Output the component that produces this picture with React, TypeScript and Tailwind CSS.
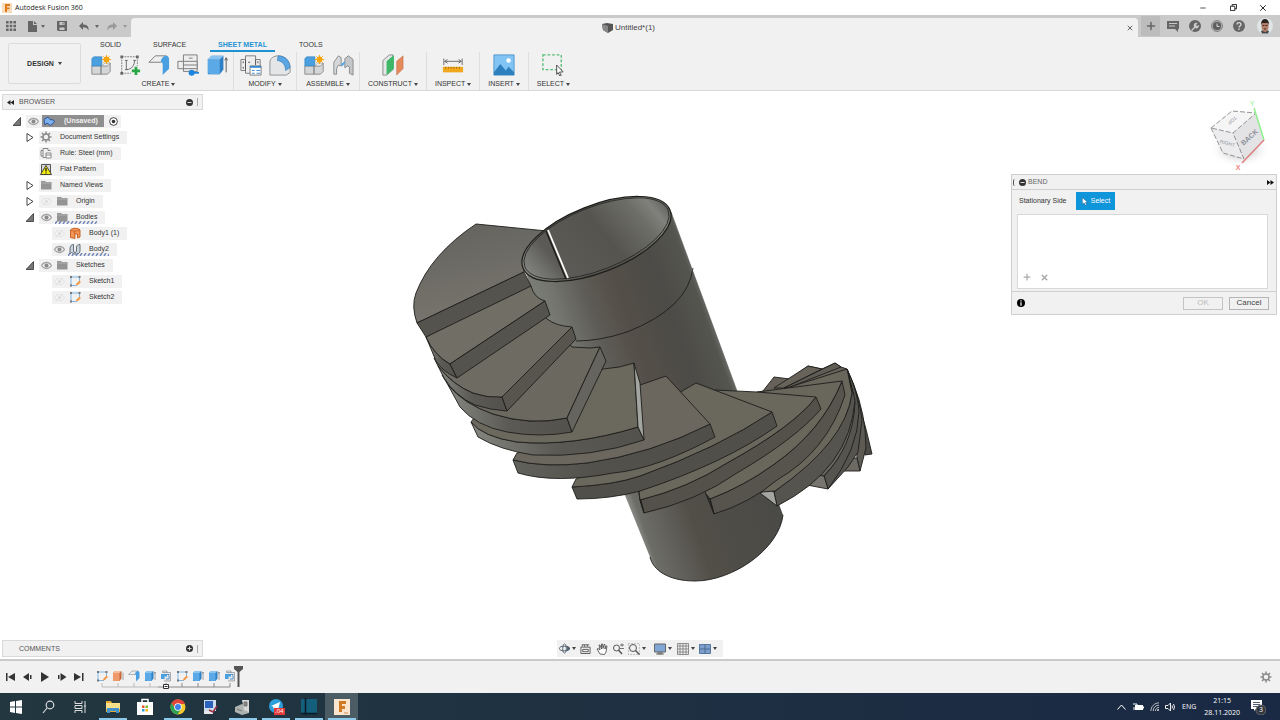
import type { ReactNode } from "react";
import { Search, Minus, X, Plus } from "lucide-react";

type IconName =
  | "box" | "boxStar" | "sketch" | "sketchPlus" | "flange" | "bend" | "unfold" | "rules" | "corner"
  | "joint" | "planes" | "ruler" | "image" | "select" | "gear" | "folder" | "eye" | "eyeOff" | "rule"
  | "flat" | "sheet" | "body" | "root" | "orangeBox";

// every glyph is drawn on a 24 unit grid
const glyphs: Record<IconName, ReactNode> = {
  box: (
    <>
      <path d="M2 6 6 2h13v15l-4 5H2z" fill="#2f7fc4" />
      <path d="M2 6h13v16H4l-2-2z" fill="#5ba9e6" />
      <path d="m2 6 4-4h13l-4 4z" fill="#8cc4f0" />
      <path d="M22 5v15M20.500 7 22 4l1.500 3" stroke="#555" fill="none" />
    </>
  ),
  orangeBox: (
    <>
      <path d="M2 6 6 2h13v15l-4 5H2z" fill="#c4683a" />
      <path d="M2 6h13v16H2z" fill="#f09a6c" />
      <path d="m2 6 4-4h13l-4 4z" fill="#f7bd9c" />
      <path d="M22 5v15" stroke="#555" />
    </>
  ),
  boxStar: (
    <>
      <path d="M2 13h10v9H2zM12 13h7l3-3v9l-3 3h-7z" fill="#d4d6d8" stroke="#888" />
      <path d="M2 5 4 3h9v9l-1 1H2z" fill="#4a9fe0" stroke="#2d7dbb" strokeWidth=".6" />
      <path d="m13 13 3-3h6l-3 3z" fill="#eee" stroke="#888" strokeWidth=".6" />
      <circle cx="18" cy="6" r="3.200" fill="#f5a50b" />
      <path d="M18 1v10M13 6h10M14.500 2.500l7 7M21.500 2.500l-7 7" stroke="#f5a50b" />
    </>
  ),
  sketch: (
    <>
      <path d="M4 4h17M4 4v17h12M21 4v9" stroke="#4f9bdc" fill="none" strokeWidth="1.400" />
      <path d="M2 2h4v4H2zM19 2h4v4h-4zM2 19h4v4H2z" fill="#777" />
      <path d="m14 21 1-4 6-6 3 3-6 6z" fill="#f29a4a" />
    </>
  ),
  sketchPlus: (
    <>
      <path d="M3 3h17M3 3v18h10M20 3v10" stroke="#777" fill="none" strokeDasharray="2 1" />
      <path d="M1.500 1.500h3v3h-3zM18.500 1.500h3v3h-3zM1.500 19.500h3v3h-3z" fill="#666" />
      <path d="M8 7v10c6 0 9-5 9-10M6.500 7h3M6.500 17h3M15.500 7h3" stroke="#666" fill="none" />
      <path d="M18.500 14v9M14 18.500h9" stroke="#2aa745" strokeWidth="3" />
    </>
  ),
  flange: (
    <>
      <path d="M1 9 8 2h12l-6 7z" fill="#eee" stroke="#777" />
      <path d="M14 9c0-4 3-7 6-7 2 0 3 2 3 4v10l-7 7V11c0-1-1-2-2-2z" fill="#4a9fe0" />
    </>
  ),
  bend: (
    <>
      <path d="M7 1h15v18H7z" fill="#eee" stroke="#777" />
      <path d="M1 8h21v8H1z" fill="#eee" stroke="#777" />
      <path d="M13 4.500h4M7 8v8M7 12h15" stroke="#777" fill="none" />
      <path d="M16 20.500h8" stroke="#1f86e0" strokeWidth="2" />
      <circle cx="16" cy="20.500" r="3.300" fill="#1f86e0" />
    </>
  ),
  unfold: (
    <>
      <path d="M5 5h16v17H8M5 5V2h9v3" fill="#e2e6ea" stroke="#666" />
      <path d="M2 8h12v5H9v5H2z" fill="#4a9fe0" />
      <path d="M14 9h4v9h-6" fill="none" stroke="#2f7fc4" strokeWidth="1.500" />
    </>
  ),
  rules: (
    <>
      <path d="M6 2h11v4h5v12h-5v3H6v-3H1V6h5z" fill="#eee" stroke="#777" />
      <path d="M6 6v12M17 6v6M3.500 8v2M3.500 14v2M19.500 8v2M9 9h2" stroke="#444" />
      <path d="M11 13h12v10H11z" fill="#fff" stroke="#777" />
      <path d="M11 13h12v2H11z" fill="#2f86d0" />
      <path d="M13 18h3M18 18h4M13 21h3M18 21h4" stroke="#2f86d0" />
    </>
  ),
  corner: (
    <>
      <path d="M1 23V9c0-4 4-7 9-7 8 0 13 6 13 13v5l-4 3z" fill="#e3e5e6" stroke="#8a8d90" />
      <path d="M10 2c8 0 13 6 13 13l-5 3c0-6-3-10-9-11z" fill="#5aa6e3" stroke="#3079b6" strokeWidth=".6" />
    </>
  ),
  joint: (
    <>
      <path d="M2 9 7 2l3 2v9l-3-1-2 4v6H2z" fill="#d5d8da" stroke="#888" />
      <path d="m14 5 4-3 5 4v17l-4-2v-7l-2-1-3 2z" fill="#c3c7ca" stroke="#888" />
      <path d="m10 11 4-3v3l-4 3z" fill="#5aa6e3" />
    </>
  ),
  planes: (
    <>
      <path d="M1 7 8 1h4v16l-7 6H1z" fill="#e4e6e7" stroke="#888" />
      <path d="m5 8 8-7v15l-8 7z" fill="#3fb768" />
      <path d="m16 8 7-6v14l-7 7z" fill="#e58a5c" stroke="#b86238" strokeWidth=".5" />
    </>
  ),
  ruler: (
    <>
      <path d="M2 5v7M22 5v7M3 8h18M6 6 3 8l3 2M18 6l3 2-3 2" stroke="#666" fill="none" />
      <path d="M1 14h22v6H1z" fill="#f2a81d" />
      <path d="M4 14v2M7 14v2M10 14v2M13 14v2M16 14v2M19 14v2" stroke="#8a5c00" strokeWidth=".8" />
    </>
  ),
  image: (
    <>
      <path d="M1 1h22v22H1z" fill="#82c4f3" stroke="#4b94cb" />
      <path d="M1 20 8 11l6 7 3-4 6 6v3H1z" fill="#2d80bd" />
      <circle cx="17" cy="7" r="2.500" fill="#fff" />
    </>
  ),
  select: (
    <>
      <path d="M1 1h20v16H1z" fill="none" stroke="#57bd76" strokeWidth="1.500" strokeDasharray="3 2" />
      <path d="m16 12 7 7.500-4 .3 2 3.500-1.500.7-2-3.700-1.500 2z" fill="#fff" stroke="#444" />
    </>
  ),
  gear: (
    <>
      <circle cx="12" cy="12" r="6" fill="none" stroke="#8a8a8a" strokeWidth="3" />
      <path d="M12 1v5M12 18v5M1 12h5M18 12h5M4 4l4 4M16 16l4 4M20 4l-4 4M8 16l-4 4" stroke="#8a8a8a" strokeWidth="3" />
    </>
  ),
  folder: (
    <>
      <path d="M2 4h8l2 2h11v15H2z" fill="#949494" />
      <path d="M2 8h21" stroke="#b9b9b9" strokeWidth="1.500" />
    </>
  ),
  eye: (
    <>
      <path d="M1 12c6-9 16-9 22 0-6 9-16 9-22 0z" fill="none" stroke="#a0a0a0" strokeWidth="2.500" />
      <circle cx="12" cy="12" r="4.500" fill="#8a8a8a" />
    </>
  ),
  eyeOff: (
    <>
      <path d="M1 12c6-9 16-9 22 0-6 9-16 9-22 0zM4 20 20 5" fill="none" stroke="#dfdfdf" strokeWidth="2" />
      <circle cx="12" cy="12" r="3" fill="#dadada" />
    </>
  ),
  rule: (
    <>
      <path d="M6 3h10v4h5M6 3v4H2v11h4v3h6M6 7v11" fill="none" stroke="#888" strokeWidth="2" />
      <path d="M12 12h10v10H12zM12 16h10" fill="#fff" stroke="#888" strokeWidth="2" />
    </>
  ),
  flat: (
    <>
      <path d="M3 3h18v18H3z" fill="#d5d8da" stroke="#555" strokeWidth="2" />
      <path d="m12 5 11 18H1z" fill="#f4ee12" stroke="#333" strokeWidth="1.800" />
      <path d="M12 10v7M12 19v2" stroke="#111" strokeWidth="2.500" />
    </>
  ),
  sheet: (
    <path d="M2 22V12c0-6 3-9 7-9v13c0 4 6 4 6 0V8c0-3 3-5 7-5v12c0 5-3 7-7 7h-4c-3 0-4-3-6-3z" fill="#cdd6df" stroke="#59636d" strokeWidth="1.800" />
  ),
  body: (
    <>
      <path d="M3 6c4-5 16-4 19 0v14l-5 2v-8h-5v9l-9-2z" fill="#f3955a" stroke="#c45a18" strokeWidth="1.800" />
      <path d="M3 6c5 3 13 3 19 0M11 8v6" fill="none" stroke="#c45a18" strokeWidth="1.500" />
    </>
  ),
  root: (
    <path d="M2 9 10 4l4 5 7 1 2 4-8 7-7-5-4 4z" fill="#7fb0ee" stroke="#234f96" strokeWidth="1.800" />
  ),
};

function Icon({ name, className }: { name: IconName; className: string }) {
  return (
    <svg viewBox="0 0 24 24" className={`shrink-0 ${className}`} aria-hidden="true">
      {glyphs[name]}
    </svg>
  );
}

function Caret({ className = "text-[#444]" }: { className?: string }) {
  return (
    <svg viewBox="0 0 4 3" className={`h-[3px] w-1 shrink-0 ${className}`} aria-hidden="true">
      <path d="M0 0h4L2 3z" fill="currentColor" />
    </svg>
  );
}

function TitleBar() {
  return (
    <header className="flex h-[15px] shrink-0 items-center justify-between bg-white pl-0.5 font-['Open_Sans',sans-serif] text-[7px] text-black">
      <div className="flex items-center gap-[3px]">
        <svg viewBox="0 0 10 10" className="size-[10px]" aria-hidden="true">
          <path d="M0 0h10v10H0z" fill="#f9dcbc" />
          <path d="M3 9V1h5v2H5v1.500h2.500v1.700H5V9z" fill="#e07b1c" />
        </svg>
        <span className="text-[#222]">Autodesk Fusion 360</span>
      </div>
      <div className="flex items-center pr-0.5">
        <button aria-label="Minimize" className="grid w-[30px] place-items-center"><Minus size={8} /></button>
        <button aria-label="Restore" className="grid w-[30px] place-items-center">
          <svg viewBox="0 0 8 8" className="size-[7px]" fill="none" stroke="#111" aria-hidden="true">
            <path d="M.5 2.500h5v5h-5zM2.500 2.500v-2h5v5h-2" />
          </svg>
        </button>
        <button aria-label="Close" className="grid w-[30px] place-items-center"><X size={10} /></button>
      </div>
    </header>
  );
}

function TabBar() {
  return (
    <div className="flex h-[22px] shrink-0 bg-[#cacaca] text-[#666]">
      <div className="flex w-[131px] shrink-0 items-center pl-1.5">
        <button aria-label="Data panel">
          <svg viewBox="0 0 10 10" className="size-[10px]" fill="#666" aria-hidden="true">
            <path d="M0 0h2.600v2.600H0zM3.700 0h2.600v2.600H3.700zM7.400 0H10v2.600H7.400zM0 3.700h2.600v2.600H0zM3.700 3.700h2.600v2.600H3.700zM7.400 3.700H10v2.600H7.400zM0 7.400h2.600V10H0zM3.700 7.400h2.600V10H3.700zM7.400 7.400H10V10H7.400z" />
          </svg>
        </button>
        <button aria-label="File" className="ml-3 flex items-center gap-1">
          <svg viewBox="0 0 9 11" className="h-[11px] w-[9px]" fill="#666" aria-hidden="true"><path d="M0 0h5v4h4v7H0zM6 0l3 3H6z" /></svg>
          <Caret className="text-[#666]" />
        </button>
        <button aria-label="Save" className="ml-3">
          <svg viewBox="0 0 10 10" className="size-[10px]" aria-hidden="true">
            <path d="M0 0h10v10H1L0 9z" fill="#666" />
            <path d="M2.500 1h5v3h-5zM2.500 6.500h5V9h-5z" fill="#cacaca" />
            <path d="M5.500 1.500h1v2h-1z" fill="#666" />
          </svg>
        </button>
        <button aria-label="Undo" className="ml-3 flex items-center gap-1.5">
          <svg viewBox="0 0 10 9" className="h-[9px] w-[10px]" aria-hidden="true"><path d="M4 0v2.500c4 0 6 2 5.500 6C8.500 6 7 5.200 4 5.200V8L0 4z" fill="#666" /></svg>
          <Caret className="text-[#666]" />
        </button>
        <button aria-label="Redo" className="ml-2 flex items-center gap-1.5">
          <svg viewBox="0 0 10 9" className="h-[9px] w-[10px]" aria-hidden="true"><path d="M6 0v2.500c-4 0-6 2-5.500 6C1.500 6 3 5.200 6 5.200V8l4-4z" fill="#999" /></svg>
          <Caret className="text-[#999]" />
        </button>
      </div>
      <div className="mt-[3px] flex flex-1 items-center rounded-t-sm bg-[#f1f1f1] pr-1">
        <div className="flex flex-1 items-center justify-center gap-0.5 text-[8px] text-[#444]">
          <svg viewBox="0 0 11 10" className="h-[10px] w-[11px]" aria-hidden="true">
            <path d="M0 1 5 0l6 1v6L6 10 1 7z" fill="#555" />
            <path d="m0 1 6 2v7L1 7z" fill="#888" />
          </svg>
          Untitled*(1)
        </div>
        <button aria-label="Close document"><X size={8} strokeWidth={3} /></button>
      </div>
      <div className="flex w-[142px] shrink-0 items-center gap-2.5 pl-[3px]">
        <button aria-label="New tab" className="grid h-5 w-[19px] place-items-center bg-[#bcbcbc]"><Plus size={12} strokeWidth={3} /></button>
        <button aria-label="Comments" className="-ml-[3px]">
          <svg viewBox="0 0 12 12" className="size-3" aria-hidden="true">
            <path d="M0 1h12v8h-1v3L8 9H0z" fill="#666" />
            <path d="M2 3.500h8M2 6h6" stroke="#cacaca" />
          </svg>
        </button>
        <button aria-label="Extensions">
          <svg viewBox="0 0 12 12" className="size-3" aria-hidden="true">
            <circle cx="6" cy="6" r="6" fill="#666" />
            <path d="m2 10 3-3C4 4 6 2 8.500 3L7 5l1 1 2-1c0 3-2 4-4 3l-3 3" fill="#cacaca" />
          </svg>
        </button>
        <button aria-label="Job status">
          <svg viewBox="0 0 12 12" className="size-3" aria-hidden="true">
            <circle cx="6" cy="6" r="5.500" fill="#aaa" stroke="#888" />
            <circle cx="6" cy="6" r="4" fill="#5d5d5d" />
            <path d="M6 3.500V6.500h2.500" stroke="#ddd" fill="none" />
          </svg>
        </button>
        <button aria-label="Help">
          <svg viewBox="0 0 12 12" className="size-3" aria-hidden="true">
            <circle cx="6" cy="6" r="6" fill="#666" />
            <path d="M4 4.500C4 2 8 2 8 4.500 8 6 6 6 6 7.500M6 8.500V10" stroke="#ddd" strokeWidth="1.300" fill="none" />
          </svg>
        </button>
        <button aria-label="Account" className="ml-0.5">
          <svg viewBox="0 0 16 16" className="size-4" aria-hidden="true">
            <circle cx="8" cy="8" r="8" fill="#dfe5e6" />
            <path d="M4 13c1-1 7-1 8 0l-1 2.500H5z" fill="#41474c" />
            <path d="M4.500 6c0-5 7-5 7 0v3c0 3-2 5-3.500 5S4.500 12 4.500 9z" fill="#b07d68" />
            <path d="M4 7c-.5-8 8.500-8 8 0l-1-2H5z" fill="#2d2321" />
            <path d="M5.500 7.500h2M8.500 7.500h2M7 11h2" stroke="#4a2f28" />
          </svg>
        </button>
      </div>
    </div>
  );
}

const groups: { label: string; icons: IconName[] }[] = [
  { label: "CREATE", icons: ["boxStar", "sketchPlus", "flange", "bend", "box"] },
  { label: "MODIFY", icons: ["rules", "corner"] },
  { label: "ASSEMBLE", icons: ["boxStar", "joint"] },
  { label: "CONSTRUCT", icons: ["planes"] },
  { label: "INSPECT", icons: ["ruler"] },
  { label: "INSERT", icons: ["image"] },
  { label: "SELECT", icons: ["select"] },
];

const tabs = ["SOLID", "SURFACE", "SHEET METAL", "TOOLS"];

function Ribbon() {
  return (
    <div className="flex h-[54px] shrink-0 border-b border-[#d8d8d8] bg-[#f1f1f1] text-[7px] text-[#333]">
      <button className="mt-1.5 ml-2 flex h-[41px] w-[73px] shrink-0 items-center justify-center gap-1 rounded-xs border border-[#dcdcdc] font-bold">
        DESIGN <Caret />
      </button>
      <div className="ml-[3px] flex flex-col">
        <nav className="flex h-4 gap-4 pl-2">
          {tabs.map((tab) => (
            <a
              key={tab}
              href="#ribbon"
              className={
                tab === "SHEET METAL"
                  ? "border-b-2 border-[#1f93d1] px-2 pt-[3px] leading-[10px] font-bold text-[#1f93d1]"
                  : "px-2 pt-[3px] leading-[10px]"
              }
            >
              {tab}
            </a>
          ))}
        </nav>
        <div className="flex">
          {groups.map((group) => (
            <div
              key={group.label}
              className={
                group.icons.length > 1
                  ? "flex flex-col items-center border-r border-[#dedede] px-1"
                  : "flex flex-col items-center border-r border-[#dedede] px-2 last:border-0"
              }
            >
              <div className="flex h-[25px] items-center gap-1">
                {group.icons.map((icon, i) => (
                  <button key={i} aria-label={`${group.label} ${i + 1}`} className="grid w-[25px] place-items-center">
                    <Icon name={icon} className="size-[22px]" />
                  </button>
                ))}
              </div>
              <button className="flex items-center gap-0.5 pt-px leading-3">
                {group.label} <Caret />
              </button>
            </div>
          ))}
        </div>
      </div>
    </div>
  );
}

type Row = {
  label: string;
  level: 0 | 1 | 2;
  icon: IconName;
  eye?: "eye" | "eyeOff";
  open?: boolean;
  wavy?: boolean;
};

const rows: Row[] = [
  { label: "(Unsaved)", level: 0, icon: "root", eye: "eye", open: true },
  { label: "Document Settings", level: 1, icon: "gear", open: false },
  { label: "Rule: Steel (mm)", level: 1, icon: "rule" },
  { label: "Flat Pattern", level: 1, icon: "flat" },
  { label: "Named Views", level: 1, icon: "folder", open: false },
  { label: "Origin", level: 1, icon: "folder", eye: "eyeOff", open: false },
  { label: "Bodies", level: 1, icon: "folder", eye: "eye", open: true, wavy: true },
  { label: "Body1 (1)", level: 2, icon: "body", eye: "eyeOff" },
  { label: "Body2", level: 2, icon: "sheet", eye: "eye", wavy: true },
  { label: "Sketches", level: 1, icon: "folder", eye: "eye", open: true },
  { label: "Sketch1", level: 2, icon: "sketch", eye: "eyeOff" },
  { label: "Sketch2", level: 2, icon: "sketch", eye: "eyeOff" },
];

const indent = ["pl-[10px]", "pl-[23px]", "pl-[36px]"];

function TreeRow({ row }: { row: Row }) {
  const isRoot = row.level === 0;
  return (
    <li className={`flex h-4 items-center gap-0.5 ${indent[row.level]}`}>
      <span className="grid w-3.5 place-items-center">
        {row.open !== undefined && (
          <button aria-label={`Toggle ${row.label}`} className="block">
            <svg viewBox="0 0 8 9" className="h-[9px] w-2" aria-hidden="true">
              {row.open ? <path d="M7.500.500v8H0z" fill="#777" stroke="#333" strokeWidth=".8" /> : <path d="M1 .5 7 4.500 1 8.500z" fill="#fff" stroke="#444" />}
            </svg>
          </button>
        )}
      </span>
      <div className={isRoot ? "flex h-[13px] items-center gap-0.5 bg-[#f1f1f1]" : "flex h-[13px] items-center gap-0.5 bg-[#f1f1f1] pr-2"}>
        {row.eye && (
          <span className="grid w-3.5 place-items-center"><Icon name={row.eye} className="size-[11px]" /></span>
        )}
        <span className={isRoot ? "flex h-3 items-center bg-[#8f8f8f] pr-1.5 font-bold text-[#f1f1f1]" : "relative flex h-3 items-center"}>
          <span className="grid w-3.5 place-items-center"><Icon name={row.icon} className="size-3" /></span>
          <span className={isRoot ? "ml-2" : "ml-[7px]"}>{row.label}</span>
          {row.wavy && (
            <svg className="absolute inset-x-0 -bottom-px h-[3px] w-full" aria-hidden="true">
              <path d="m0 3 2-3M4 3l2-3M8 3l2-3M12 3l2-3M16 3l2-3M20 3l2-3M24 3l2-3M28 3l2-3M32 3l2-3M36 3l2-3M40 3l2-3M44 3l2-3" stroke="#7487b8" strokeWidth="1.500" />
            </svg>
          )}
        </span>
        {isRoot && (
          <svg viewBox="0 0 10 10" className="mx-[3px] size-[9px]" aria-hidden="true">
            <circle cx="5" cy="5" r="4.300" fill="#fff" stroke="#333" />
            <circle cx="5" cy="5" r="2" fill="#333" />
          </svg>
        )}
      </div>
    </li>
  );
}

function PanelDot({ plus = false }: { plus?: boolean }) {
  return (
    <svg viewBox="0 0 7 7" className="size-[7px]" aria-hidden="true">
      <circle cx="3.500" cy="3.500" r="3.500" fill="#333" />
      <path d={plus ? "M1.500 3.500h4M3.500 1.500v4" : "M1.500 3.500h4"} stroke="#ddd" />
    </svg>
  );
}

function Browser() {
  return (
    <aside className="mt-0.5 ml-0.5 w-[201px] text-[7px] text-[#333]">
      <div className="flex h-4 items-center border border-[#d9d9d9] bg-[#f1f1f1] px-1 text-[#555]">
        <button aria-label="Collapse browser">
          <svg viewBox="0 0 7 5" className="h-[5px] w-[7px]" aria-hidden="true"><path d="M3.500 0v5L0 2.500zM7 0v5L3.500 2.500z" fill="#222" /></svg>
        </button>
        <span className="ml-[5px] flex-1">BROWSER</span>
        <button aria-label="Browser options"><PanelDot /></button>
        <span className="ml-1 h-2 border-l border-[#aaa]" />
      </div>
      <ul className="-ml-0.5 pt-[3px]">
        {rows.map((row) => <TreeRow key={row.label} row={row} />)}
      </ul>
    </aside>
  );
}

function ViewCube() {
  return (
    <svg viewBox="1200 95 77 79" className="mr-[3px] h-[79px] w-[77px]" role="img" aria-label="View cube">
      <defs>
        <radialGradient id="cubeShadow">
          <stop offset="0" stopColor="#777" stopOpacity=".7" />
          <stop offset="1" stopColor="#fff" stopOpacity="0" />
        </radialGradient>
      </defs>
      <ellipse cx="1240" cy="150" rx="31" ry="17" fill="url(#cubeShadow)" />
      <path d="m1211 128 21-17 24 2-23 20z" fill="#f5f5f6" />
      <path d="m1211 128 22 5 11 26-21-6z" fill="#ececee" />
      <path d="m1233 133 23-20 8 27-20 19z" fill="#e3e3e6" />
      <path d="m1211 128 21-17 24 2-23 20zl12 25 21 6-11-26" fill="none" stroke="#888" strokeWidth=".9" strokeDasharray="5 2" />
      <path d="m1254 108 10 32" stroke="#8ff08f" strokeWidth="1.500" />
      <path d="m1264 140-22 23" stroke="#dd7f7f" strokeWidth="1.500" />
      <g className="font-['Liberation_Sans',sans-serif] text-[7px]" textAnchor="middle" fill="#8d929b">
        <text transform="translate(1251 139) rotate(-42)" className="font-bold">BACK</text>
        <text transform="translate(1227 145) rotate(14)" className="text-[5px]">RIGHT</text>
        <text transform="translate(1231 119) rotate(140)" className="text-[5px]">TOP</text>
        <text x="1252" y="106" fill="#8df08d">Y</text>
        <text x="1238" y="170" fill="#f08484" className="font-bold">X</text>
      </g>
    </svg>
  );
}

function BendDialog() {
  return (
    <section className="mr-[3px] w-[266px] border border-[#cfcfcf] bg-[#f1f1f1] text-[7px] text-[#333]">
      <header className="flex h-[15px] items-center border-b border-[#cfcfcf] pr-0.5 text-[#666]">
        <span className="mr-1 ml-px h-[7px] w-0.5 rounded-l border-l border-[#555]" />
        <PanelDot />
        <span className="ml-0.5 flex-1">BEND</span>
        <button aria-label="Expand dialog">
          <svg viewBox="0 0 7 5" className="h-[5px] w-[7px]" aria-hidden="true"><path d="M0 0v5l3.500-2.500zM3.500 0v5L7 2.500z" fill="#111" /></svg>
        </button>
      </header>
      <div className="p-1.5 pt-0.5 pb-px pl-[5px]">
        <div className="flex items-center gap-2.5 pl-0.5">
          <label htmlFor="stationary">Stationary Side</label>
          <button id="stationary" className="flex h-[18px] w-[39px] items-center justify-center gap-[3px] bg-[#0f95da] text-white">
            <svg viewBox="0 0 7 10" className="h-[9px] w-1.5" aria-hidden="true"><path d="M.5.500v7.500L2.500 6.500 4 9.500l1.200-.6L4 6h2.500z" fill="#fff" stroke="#246" strokeWidth=".4" /></svg>
            Select
          </button>
        </div>
        <div className="mt-1 mr-0.5 flex h-[75px] items-end gap-2 border border-[#d9d9d9] bg-white px-1 pb-1.5 text-[#aaa]">
          <button aria-label="Add"><Plus size={10} strokeWidth={3} /></button>
          <button aria-label="Remove"><X size={9} strokeWidth={4} /></button>
        </div>
      </div>
      <footer className="mt-px flex h-[23px] items-center gap-1.5 border-t border-[#cfcfcf] pr-[7px] pl-[5px] text-[8px]">
        <span className="flex-1">
          <svg viewBox="0 0 8 8" className="size-2" aria-hidden="true">
            <circle cx="4" cy="4" r="4" fill="#000" />
            <path d="M4 1.200v1.300M4 3.200V6.700" stroke="#fff" strokeWidth="1.200" />
          </svg>
        </span>
        <button disabled className="h-[13px] w-10 border border-[#c4c4c4] leading-[10px] text-[#bbb]">OK</button>
        <button className="h-[13px] w-10 border border-[#b5b5b5] leading-[10px] text-[#444]">Cancel</button>
      </footer>
    </section>
  );
}

// treads and rims of the spiral, listed from the back to the front
const faces: [string, string][] = [
  // far treads behind the fan
  ["M763 391 774 377 790 379 808 366 822 369 835 363 841 367 847 369 842 383 757 393Z", "#66625a"],
  ["M774 388 808 366 822 369 784 388Z", "#67635a"],
  ["M784 388 835 363 841 367 790 387Z", "#605d55"],
  // right hand rims
  ["M847 369Q861 405 872 454L865 455 858 400Z", "#4c4b46"],
  ["M847 369Q862 400 865 430L866 448 860 471 857 458 855 420Z", "#5c5a53"],
  ["M843 471 848 458 857 458 860 471Z", "#6c6a62"],
  ["M847 369Q860 398 862 420L858 452 848 467 828 489 820 476Z", "#56544e"],
  ["M847 369 857 405Q858 440 824 476L800 480 780 470Z", "#69665c"],
  ["M847 369Q858 392 859 412 858 450 828 489L824 476Q853 446 855 403Z", "#56544e"],
  ["M807 485 815 475 824 476 828 489Z", "#76746c"],
  ["M847 369 853 393Q847 439 775 493L740 480 780 430Z", "#69665c"],
  ["M847 369 855 400Q850 469 777 506L774 492Q847 439 852 393Z", "#56544e"],
  ["M760 493 768 489 774 492 777 506Z", "#a4a4a0"],
  ["M790 387 847 369 852 393Q846 442 775 491L762 492 740 480Z", "#69665c"],
  ["M842 381 845 395Q827 451 777 480 750 503 714 514L710 499Q744 486 773 465 822 431 842 381Z", "#56544d"],
  ["M706 494 710 499 714 514Z", "#333"],
  ["M757 392 842 381Q822 431 773 465 744 486 710 499L706 494 700 470 800 410Z", "#69665c"],
  ["M816 397 821 409Q795 439 737 473 697 501 644 513L640 500Q688 488 727 463 794 426 816 397Z", "#53514a"],
  ["M639 492 640 500 644 513Z", "#444"],
  ["M715 390 757 392 816 397Q794 426 727 463 688 488 640 500L639 492 660 470Z", "#6a675d"],
  ["M772 412 777 426Q725 463 640 491 611 499 577 499L572 487Q614 485 640 476 718 448 772 412Z", "#514f49"],
  ["M682 391 696 383 772 412Q718 448 640 476 614 485 572 487L576 479 640 450Z", "#6a675d"],
  ["M710 424 715 437Q656 469 613 473 555 484 518 473L513 460Q544 468 587 463 651 454 710 424Z", "url(#rimDark)"],
  ["M640 385 666 376 710 424Q651 454 587 463 544 468 513 460L517 453 560 440Z", "#6b675e"],
  ["M638 427 644 440Q591 458 533 455 500 450 478 437L471 422Q483 437 517 442 572 447 638 427Z", "url(#rim)"],
  ["M603 369Q620 368 634 363L638 427Q572 447 517 442 483 437 471 422L474 418 500 410 580 380Z", "#6b685e"],
  ["M634 363 640 383 644 440 638 427Z", "#a3a5a1"],
  ["M567 418 572 432Q540 438 507 432 476 426 460 407L448 385Q464 404 493 414 530 426 567 418Z", "url(#rim)"],
  ["M566 340 572 347 590 348 600 347 567 418Q530 426 493 414 464 404 448 385L442 375 500 390Z", "#6b685f"],
  ["M600 347 606 361 572 432 567 418Z", "#65645f"],
  ["M502 397 507 411Q490 410 475 405 455 396 444 378L438 366Q453 385 473 393 487 398 502 397Z", "url(#rim)"],
  ["M540 310 547 319Q556 326 572 327L502 397Q487 398 473 393 453 385 438 366L434 358Z", "#6e6b62"],
  ["M572 327 576 339 507 411 502 397Z", "#57554e"],
  ["M426 337Q434 355 450 364L457 378Q442 371 436 361Z", "url(#rim)"],
  ["M426 337 524 280 531 286Q534 298 545 301L450 364Q434 355 426 337Z", "#716e66"],
  ["M545 301 550 315 457 378 450 364Z", "#55534d"],
  ["M417 323 524 272 531 286 426 337Z", "#55534e"],
];

function Model() {
  return (
    <svg viewBox="0 91 1280 568" className="absolute inset-0 size-full" role="img" aria-label="Spiral stair model">
      <defs>
        <linearGradient id="tube" gradientUnits="userSpaceOnUse" x1="535" y1="300" x2="690" y2="245">
          <stop offset="0" stopColor="#7b7d77" />
          <stop offset=".12" stopColor="#73746e" />
          <stop offset=".3" stopColor="#5e5c56" />
          <stop offset=".48" stopColor="#544f48" />
          <stop offset=".75" stopColor="#4c4b47" />
          <stop offset=".94" stopColor="#555550" />
          <stop offset="1" stopColor="#777874" />
        </linearGradient>
        <linearGradient id="tubeEnd" gradientUnits="userSpaceOnUse" x1="634" y1="535" x2="775" y2="485">
          <stop offset="0" stopColor="#a0a19d" />
          <stop offset=".08" stopColor="#6d6d68" />
          <stop offset=".4" stopColor="#524f48" />
          <stop offset="1" stopColor="#494946" />
        </linearGradient>
        <linearGradient id="bore" gradientUnits="userSpaceOnUse" x1="524" y1="262" x2="670" y2="212">
          <stop offset="0" stopColor="#858682" />
          <stop offset=".2" stopColor="#5b5a56" />
          <stop offset=".55" stopColor="#55544f" />
          <stop offset=".8" stopColor="#6e6e69" />
          <stop offset=".9" stopColor="#80807c" />
          <stop offset="1" stopColor="#5c5c58" />
        </linearGradient>
        <linearGradient id="tread" x1="0" y1="0" x2=".3" y2="1">
          <stop offset="0" stopColor="#63625d" />
          <stop offset="1" stopColor="#77756d" />
        </linearGradient>
        <linearGradient id="rim">
          <stop offset="0" stopColor="#85867f" />
          <stop offset=".5" stopColor="#5a5954" />
          <stop offset="1" stopColor="#53514b" />
        </linearGradient>
        <linearGradient id="rimDark">
          <stop offset="0" stopColor="#62625c" />
          <stop offset=".4" stopColor="#53514b" />
          <stop offset="1" stopColor="#504e48" />
        </linearGradient>
      </defs>
      <g stroke="#1d1d1b" strokeWidth=".9" strokeLinejoin="round">
        <path d="M476 224 547 231 530 250 524 272 417 323Q411 306 416 293 431 254 476 224Z" fill="url(#tread)" />
        <path d="M523 262 530 286 545 330 624 495 700 495 737 391 671 212Z" fill="url(#tube)" stroke="none" />
        <path d="M624 493 650 557C653 570 668 581 695 581 733 581 779 549 783 515L770 480Z" fill="url(#tubeEnd)" stroke="none" />
        <path d="M650 557C653 570 668 581 695 581 733 581 779 549 783 515" fill="none" />
        <path d="M576 341Q600 341 627 332 688 308 693 268" fill="none" />
        <path d="m671 212 66 179" stroke="#555" strokeWidth=".6" />
        <ellipse cx="596.500" cy="239" rx="79" ry="33.500" transform="rotate(-21.500 596.500 239)" fill="url(#bore)" strokeWidth="1.200" />
        <ellipse cx="596.500" cy="238.500" rx="77" ry="31.500" transform="rotate(-21.500 596.500 238.500)" fill="none" strokeWidth=".7" />
        <path d="M546 231 566 279" strokeWidth="1.500" />
        <path d="M548 230 568 278" stroke="#fff" strokeWidth="1.800" />
        {faces.map(([d, fill]) => <path key={d} d={d} fill={fill} />)}
      </g>
    </svg>
  );
}

function NavBar() {
  return (
    <div className="flex h-[17px] w-[166px] items-center justify-between bg-[#f1f1f1] pr-1.5 pl-0.5">
      <button aria-label="Orbit" className="flex items-center gap-0.5">
        <svg viewBox="0 0 12 12" className="size-[11px]" fill="none" stroke="#4d5d6c" aria-hidden="true">
          <ellipse cx="6" cy="6" rx="5.500" ry="2.500" /><ellipse cx="6" cy="6" rx="2" ry="5" /><path d="M9 4l3 2-3 2z" fill="#4d5d6c" />
        </svg>
        <Caret />
      </button>
      <button aria-label="Look at">
        <svg viewBox="0 0 12 12" className="size-[11px]" fill="none" stroke="#555" aria-hidden="true"><path d="M1 4.500h10v7H1zM2 4l1-2M5 4V2M8 4V2M3 7h6v2.500H3zM2 2h8" /></svg>
      </button>
      <button aria-label="Pan">
        <svg viewBox="0 0 12 12" className="size-3" fill="#fff" stroke="#444" aria-hidden="true"><path d="M4 11 1 6l1-.5L4 7 3 2h1l1.500 4V1h1L7 5.500 8 1.500h1V6l1-3h1l-1 6-1.500 2.500z" strokeWidth=".8" /></svg>
      </button>
      <button aria-label="Zoom">
        <svg viewBox="0 0 12 12" className="size-3" fill="none" stroke="#555" aria-hidden="true"><circle cx="4.500" cy="5" r="3" /><path d="m6.500 7 3.500 4" strokeWidth="1.500" /><path d="M8 2h4M10 .5v3M8 5.500h4" strokeWidth=".8" /></svg>
      </button>
      <button aria-label="Fit" className="flex items-center gap-0.5">
        <svg viewBox="0 0 12 12" className="size-3" fill="none" stroke="#555" aria-hidden="true"><path d="M.5.500h11v11H.5z" strokeDasharray="1 2" strokeWidth=".6" /><circle cx="5" cy="5" r="3.500" /><path d="m7.500 7.500 4 4" strokeWidth="1.500" /></svg>
        <Caret />
      </button>
      <button aria-label="Display settings" className="ml-1 flex items-center gap-0.5">
        <svg viewBox="0 0 12 12" className="size-3" aria-hidden="true"><path d="M.5 1h11v8H.5z" fill="#7fa8d4" stroke="#666" /><path d="M4 9h4v2H4zM2 11h8" stroke="#777" fill="#999" /></svg>
        <Caret />
      </button>
      <button aria-label="Grid" className="flex items-center gap-0.5">
        <svg viewBox="0 0 12 12" className="size-3" fill="none" stroke="#777" aria-hidden="true"><path d="M.5.500h11v11H.5zM.5 3h11M.5 6h11M.5 9h11M3 .5v11M6 .5v11M9 .5v11" strokeWidth=".8" /></svg>
        <Caret />
      </button>
      <button aria-label="Viewports" className="flex items-center gap-0.5">
        <svg viewBox="0 0 12 12" className="size-3" aria-hidden="true"><path d="M.5 1.500h11v9H.5z" fill="#7d9fc9" stroke="#5678a3" /><path d="M6 1.500v9M.5 6h11" stroke="#4a6b96" /></svg>
        <Caret />
      </button>
    </div>
  );
}

const transport: [string, string][] = [
  ["Go to start", "M0 1h1.500v8H0zM9 1v8L2 5z"],
  ["Step back", "M6 1v8L0 5zM7 3h1.500v4H7z"],
  ["Play", "M1 0v10l8-5z"],
  ["Step forward", "M3.500 1v8l6-4zM1 3h1.500v4H1z"],
  ["Go to end", "M8 1h1.500v8H8zM0 1v8l7-4z"],
];

const features: IconName[] = ["sketch", "orangeBox", "flange", "box", "unfold", "sketch", "box", "box", "unfold"];

function Timeline() {
  return (
    <div className="flex h-[34px] shrink-0 items-center border-t-2 border-[#cacaca] bg-[#f1f1f1] pr-2">
      <div className="flex w-[94px] items-center gap-[7px] pl-1.5">
        {transport.map(([label, d]) => (
          <button key={label} aria-label={label}>
            <svg viewBox="0 0 10 10" className="size-[10px]" aria-hidden="true"><path d={d} fill="#333" /></svg>
          </button>
        ))}
      </div>
      <div className="flex flex-1">
        {features.map((feature, i) => (
          <button key={i} aria-label={`Feature ${i + 1}`} className="flex w-4 flex-col items-center pt-[5px]">
            <Icon name={feature} className="size-3" />
            <svg viewBox="0 0 16 7" className="h-[7px] w-4" aria-hidden="true">
              <path d={i === 0 ? "M8 1v4h8" : i === features.length - 1 ? "M0 5h8V1" : "M0 5h16M8 1v4"} fill="none" stroke={i < 4 ? "#bbb" : "#888"} />
              {i === 4 && <path d="M5.500 2.500h5v4h-5zM6.500 4.500h3" fill="#fff" stroke="#333" />}
            </svg>
          </button>
        ))}
        <svg viewBox="0 0 9 23" className="-ml-1 h-[23px] w-[9px]" aria-hidden="true"><path d="M0 1h9v3L5.500 7v15h-2V7L0 4z" fill="#555" /></svg>
      </div>
      <button aria-label="Timeline settings"><Icon name="gear" className="size-3" /></button>
    </div>
  );
}

const apps: { label: string; running: boolean; active?: boolean; art: ReactNode }[] = [
  { label: "Start", running: false, art: <path d="m5 6 5-1v5.500H5zM11 5l6-1v6.500h-6zM5 11.500h5V17l-5-1zM11 11.500h6V18l-6-1z" fill="#fff" /> },
  { label: "Search", running: false, art: <g fill="none" stroke="#ddd" strokeWidth="1.200"><circle cx="13" cy="9" r="3.800" /><path d="m10 12-4 5" /></g> },
  { label: "Task view", running: false, art: <path d="M6 5v2.500h7V5M6 17v-2.500h7V17M6 9.500h7v3H6zM16 5v12M15 10h2" fill="none" stroke="#ddd" /> },
  {
    label: "Explorer", running: true,
    art: <><path d="M4 5h5l1 2h8v9H4z" fill="#e4a935" /><path d="M4 7h14v6H4z" fill="#fbe08a" /><path d="M5 12h12v5h-3v-2H8v2H5z" fill="#3f93cf" /></>,
  },
  {
    label: "Store", running: false,
    art: <><path d="M3 6h16v13H3z" fill="#fff" /><path d="M8 6V3.500h6V6" fill="none" stroke="#fff" strokeWidth="1.500" /><path d="M8 9.500h2.500V12H8z" fill="#e5532d" /><path d="M11.500 9.500H14V12h-2.500z" fill="#7cb82f" /><path d="M8 13h2.500v2.500H8z" fill="#2b9fe0" /><path d="M11.500 13H14v2.500h-2.500z" fill="#f6b715" /></>,
  },
  {
    label: "Chrome", running: true,
    art: <><circle cx="11" cy="11" r="7.500" fill="#f7c92c" /><path d="M4.500 7a7.500 7.500 0 0 1 13.500 1H11L8 13z" fill="#e0463a" /><path d="M4.500 7a7.500 7.500 0 0 0 6 11.500l4-6H8z" fill="#30a350" /><circle cx="11" cy="11" r="3.800" fill="#fff" /><circle cx="11" cy="11" r="3" fill="#3f80e6" /></>,
  },
  {
    label: "Display", running: false,
    art: <><path d="M5 4h12v11H5z" fill="#cfdceb" /><path d="M6 5h8v7H6z" fill="#2963bc" /><path d="M5 15h9v3H5z" fill="#e8e8ec" /><path d="m10 14 4 2 4-6" stroke="#963146" strokeWidth="1.500" fill="none" /></>,
  },
  {
    label: "Printer", running: true,
    art: <><path d="M3 11 10 8l7 3v6l-7 2-7-3z" fill="#aeb2b1" /><path d="M10 4h7v12l-5-2z" fill="#d6d9d8" /><path d="M12 6h3v4h-3zM5 13l5 2" stroke="#777" fill="#888" /></>,
  },
  {
    label: "Telegram", running: true,
    art: <><circle cx="11" cy="10" r="7" fill="#2c9fd8" /><path d="m6 10 9-4-2 8-3-2.500-1 2-1-3z" fill="#fff" /><path d="M9 12h11v7H9z" fill="#e53b3b" /></>,
  },
  { label: "Editor", running: true, art: <><path d="M3 3h16v15H3z" fill="#14607c" /><path d="M7.500 2v17M3 17.500h16" stroke="#081b24" strokeWidth="1.500" /></> },
  {
    label: "Fusion 360", running: true, active: true,
    art: <><path d="M3 3h16v16H3z" fill="#fbe5cf" /><path d="M8 16V5h7v3h-4v2h3v3h-3v3z" fill="#d07a23" /><path d="M13 17h4" stroke="#c98f58" /></>,
  },
];

function Taskbar() {
  return (
    <footer className="flex h-[27px] shrink-0 items-stretch justify-between bg-linear-to-r from-[#22373f] to-[#1a2944] font-['Open_Sans',sans-serif] text-[7px] text-white">
      <div className="flex">
        {apps.map((app) => (
          <button
            key={app.label}
            aria-label={app.label}
            className={
              app.active
                ? "flex w-[33px] flex-col items-center bg-[#4b5c64]"
                : app.running
                  ? "flex w-[33px] flex-col items-center"
                  : "flex w-8 flex-col items-center"
            }
          >
            <span className="relative mt-[3px] block">
              <svg viewBox="0 0 22 22" className="size-[22px]" aria-hidden="true">{app.art}</svg>
              {app.label === "Telegram" && <span className="absolute right-[3px] bottom-[3px] text-[6px] leading-[7px]">.04</span>}
            </span>
            {app.running && <span className="h-0.5 w-7 bg-[#8cc9ea]" />}
          </button>
        ))}
      </div>
      <div className="flex items-center gap-1.5 pr-3.5">
        <svg viewBox="0 0 9 6" className="h-1.5 w-[9px]" fill="none" stroke="#fff" aria-hidden="true"><path d="m.5 5.500 4-4.500 4 4.500" /></svg>
        <svg viewBox="0 0 12 8" className="h-2 w-3" aria-hidden="true"><path d="M3 2h8v5H3z" fill="#fff" /><path d="M11.500 3.500v2M1 1h4v3H3M2 4v3" stroke="#fff" fill="none" /></svg>
        <svg viewBox="0 0 10 10" className="size-[9px]" fill="none" stroke="#ccc" aria-hidden="true"><path d="M1 10C1 5 5 1 10 1M3.500 10c0-4 3-6.500 6.500-6.500M6 10c0-2.500 2-4 4-4" /><circle cx="9" cy="9" r=".8" fill="#fff" /></svg>
        <svg viewBox="0 0 11 10" className="h-[10px] w-[11px]" fill="none" stroke="#eee" aria-hidden="true"><path d="M.5 3.500H3L5.500 1v8L3 6.500H.5zM7 3.500q1 1.500 0 3M8.500 2q2 3 0 6" /></svg>
        <span>ENG</span>
        <div className="ml-0.5 text-center leading-3">
          <div>21:15</div>
          <div>28.11.2020</div>
        </div>
        <button aria-label="Notifications" className="relative ml-1">
          <svg viewBox="0 0 16 16" className="size-4" aria-hidden="true">
            <path d="M1 1h11v9H6l-2 2v-2H1z" fill="#fff" />
            <path d="M3 3.500h7M3 5.500h7M3 7.500h5" stroke="#26344f" strokeWidth=".8" />
            <circle cx="11" cy="11" r="5" fill="#32363f" stroke="#777" strokeWidth=".8" />
          </svg>
          <span className="absolute right-[3px] bottom-px leading-2">3</span>
        </button>
      </div>
    </footer>
  );
}

export default function App() {
  return (
    <div className="flex h-screen flex-col overflow-hidden bg-white font-['Liberation_Sans',sans-serif] text-[7px] leading-[10px]">
      <TitleBar />
      <TabBar />
      <Ribbon />
      <main className="relative flex min-h-0 flex-1 flex-col justify-between pt-px">
        <Model />
        <div className="relative flex justify-between">
          <Browser />
          <div className="mt-[3px] flex flex-col items-end">
            <ViewCube />
            <BendDialog />
          </div>
        </div>
        <div className="relative mb-0.5 grid grid-cols-3 items-center">
          <div className="ml-0.5 flex h-[17px] w-[201px] items-center border border-[#d9d9d9] bg-[#f1f1f1] pr-1 pl-4 text-[#555]">
            <span className="flex-1">COMMENTS</span>
            <button aria-label="Add comment"><PanelDot plus /></button>
            <span className="ml-1 h-2 border-l border-[#aaa]" />
          </div>
          <div className="flex justify-center"><NavBar /></div>
        </div>
      </main>
      <Timeline />
      <Taskbar />
    </div>
  );
}
